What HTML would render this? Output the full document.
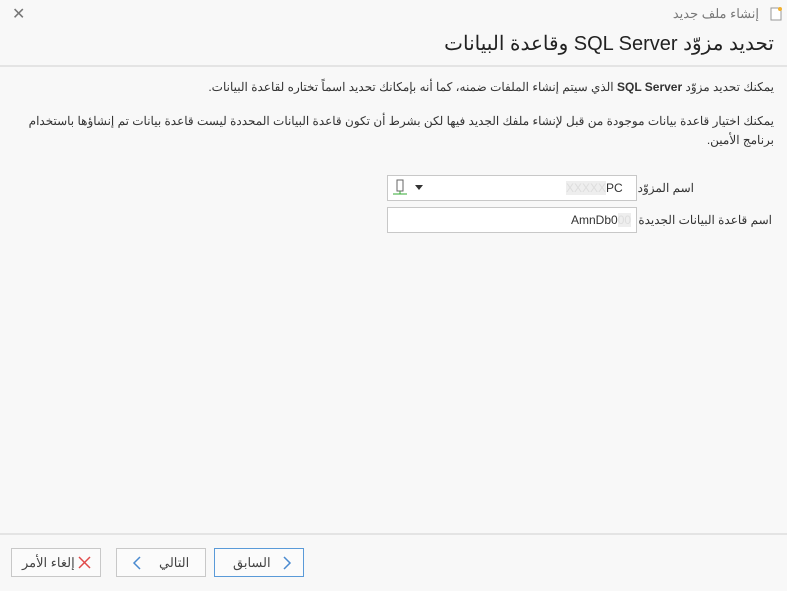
<!DOCTYPE html>
<html><head><meta charset="utf-8"><style>
body{margin:0;width:787px;height:591px;background:#f8f8f8;font-family:"Liberation Sans","Noto Sans CJK SC",sans-serif;color:#333;position:relative;overflow:hidden}
.a{position:absolute;white-space:nowrap}
.r{direction:rtl}
.btn{position:absolute;top:548px;height:29px;border:1px solid #c8c8c8;background:#fbfbfb;box-sizing:border-box;font-size:13px;color:#444}
</style></head><body>
<div class="a" style="left:12px;top:4px;font-size:16px;color:#777">✕</div>
<div class="a r" style="right:28px;top:6px;font-size:13px;color:#777">إنشاء ملف جديد</div>
<svg class="a" style="left:769px;top:6px" width="14" height="15"><path d="M2 2h7l3 3v9H2z" fill="#fff" stroke="#999"/><circle cx="11" cy="3" r="2" fill="#f0b030"/></svg>
<div class="a r" style="right:13px;top:31px;font-size:20px;color:#222">تحديد مزوّد SQL Server وقاعدة البيانات</div>
<div class="a" style="left:0;top:65px;width:787px;height:2px;background:#e4e4e4"></div>
<div class="a r" style="right:13px;top:80px;font-size:12px">يمكنك تحديد مزوّد <b>SQL Server</b> الذي سيتم إنشاء الملفات ضمنه، كما أنه بإمكانك تحديد اسماً تختاره لقاعدة البيانات.</div>
<div class="a r" style="right:13px;top:112px;width:750px;white-space:normal;font-size:12px;line-height:19px">يمكنك اختيار قاعدة بيانات موجودة من قبل لإنشاء ملفك الجديد فيها لكن بشرط أن تكون قاعدة البيانات المحددة ليست قاعدة بيانات تم إنشاؤها باستخدام برنامج الأمين.</div>
<div class="a r" style="right:93px;top:181px;font-size:12px">اسم المزوّد</div>
<div class="a" style="left:387px;top:175px;width:250px;height:26px;border:1px solid #c8c8c8;background:#fff;box-sizing:border-box"></div>
<div class="a" style="left:566px;top:181px;font-size:12px"><span style="color:#ddd;background:#eee">XXXXX</span>PC</div>
<svg class="a" style="left:393px;top:179px" width="14" height="18"><rect x="4" y="1" width="6" height="11" fill="#fff" stroke="#666"/><path d="M0 15h14M7 12v3" stroke="#3a3"/></svg>
<svg class="a" style="left:415px;top:185px" width="8" height="5"><path d="M0 0h8L4 5z" fill="#333"/></svg>
<div class="a r" style="right:15px;top:213px;font-size:12px">اسم قاعدة البيانات الجديدة</div>
<div class="a" style="left:387px;top:207px;width:250px;height:26px;border:1px solid #c8c8c8;background:#fff;box-sizing:border-box"></div>
<div class="a" style="left:571px;top:213px;font-size:12px">AmnDb0<span style="color:#ddd;background:#eee">00</span></div>
<div class="a" style="left:0;top:533px;width:787px;height:2px;background:#e4e4e4"></div>
<div class="btn" style="left:214px;width:90px;border-color:#5a9ad8"><span class="a" style="left:18px;top:6px">السابق</span><svg class="a" style="left:67px;top:7px" width="10" height="14"><path d="M2 1l6 6-6 6" fill="none" stroke="#4a8ad0" stroke-width="1.5"/></svg></div>
<div class="btn" style="left:116px;width:90px"><span class="a" style="left:42px;top:6px">التالي</span><svg class="a" style="left:15px;top:7px" width="10" height="14"><path d="M8 1L2 7l6 6" fill="none" stroke="#4a8ad0" stroke-width="1.5"/></svg></div>
<div class="btn" style="left:11px;width:90px"><span class="a" style="left:10px;top:6px">إلغاء الأمر</span><svg class="a" style="left:66px;top:7px" width="13" height="13"><path d="M1 1l11 11M12 1L1 12" stroke="#e04a4a" stroke-width="1.5"/></svg></div>
</body></html>
